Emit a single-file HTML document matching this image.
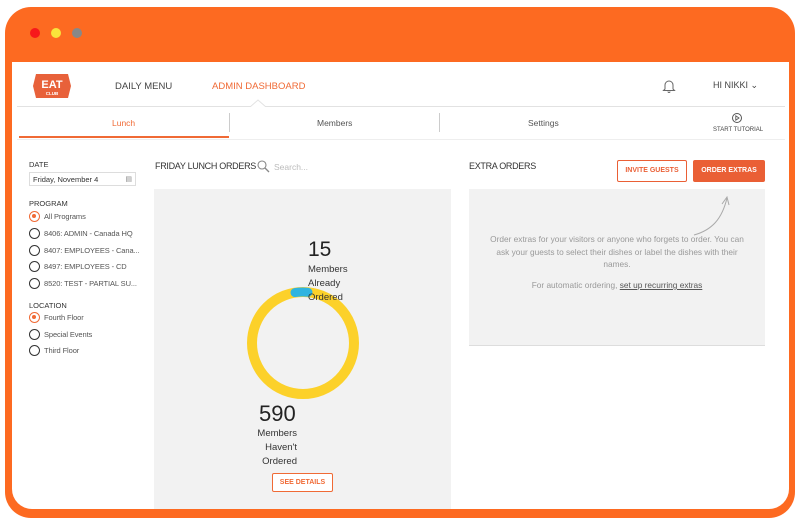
<!DOCTYPE html>
<html><head><style>
*{margin:0;padding:0;box-sizing:border-box}
body{width:800px;height:524px;background:#fff;font-family:"Liberation Sans",sans-serif;position:relative;overflow:hidden;color:#333}
.frame{position:absolute;left:5px;top:7px;width:790px;height:511px;background:#fd6a21;border-radius:26px}
.inner{position:absolute;left:12px;top:62px;width:777px;height:447px;background:#fff;border-radius:0 0 20px 20px;overflow:hidden}
.dot{position:absolute;top:28px;width:10px;height:10px;border-radius:50%}
.abs{position:absolute;white-space:nowrap}
.radio{position:absolute;width:11px;height:11px;border:1.6px solid #333;border-radius:50%}
.radio.on{border-color:#f06a35}
.radio.on::after{content:"";position:absolute;left:2px;top:2px;width:4px;height:4px;border-radius:50%;background:#f06a35}
.lbl{font-size:7.5px;color:#555;letter-spacing:-0.1px}
</style></head><body>
<div class="frame"></div>
<div class="dot" style="left:30px;background:#f7191b"></div>
<div class="dot" style="left:51px;background:#f9e43b"></div>
<div class="dot" style="left:72px;background:#888"></div>
<div class="inner">
 <svg class="abs" style="left:20px;top:9px" width="40" height="30" viewBox="0 0 40 30"><polygon points="4,3 36,3 39,15 36,27 4,27 1,15" fill="#e8613a"/><text x="20" y="17" fill="#fff" font-size="11" font-weight="bold" text-anchor="middle" font-family="Liberation Sans">EAT</text><text x="20" y="24" fill="#fff" font-size="4.5" font-weight="bold" text-anchor="middle" font-family="Liberation Sans">CLUB</text></svg>
 <div class="abs" style="left:103px;top:19px;font-size:9.5px;color:#444">DAILY MENU</div>
 <div class="abs" style="left:200px;top:19px;font-size:9.5px;color:#f06a35">ADMIN DASHBOARD</div>
 <svg class="abs" style="left:650px;top:16px" width="14" height="16" viewBox="0 0 14 16"><path d="M3 11V7a4 4 0 0 1 8 0v4l1.5 1.5h-11z M6 13.5a1 1 0 0 0 2 0" fill="none" stroke="#666" stroke-width="1"/></svg>
 <div class="abs" style="left:701px;top:18px;font-size:9px;color:#444">HI NIKKI ⌄</div>
 <div class="abs" style="left:5px;top:44px;width:768px;height:1px;background:#e2e2e2"></div>
 <svg class="abs" style="left:238px;top:37px" width="16" height="8"><path d="M0 8L8 1L16 8" fill="#fff" stroke="#e2e2e2"/></svg>
 <div class="abs" style="left:100px;top:56px;font-size:8.5px;color:#f06a35">Lunch</div>
 <div class="abs" style="left:7px;top:74px;width:210px;height:2px;background:#f06a35"></div>
 <div class="abs" style="left:217px;top:51px;width:1px;height:19px;background:#ccc"></div>
 <div class="abs" style="left:305px;top:56px;font-size:8.5px;color:#555">Members</div>
 <div class="abs" style="left:427px;top:51px;width:1px;height:19px;background:#ccc"></div>
 <div class="abs" style="left:516px;top:56px;font-size:8.5px;color:#555">Settings</div>
 <svg class="abs" style="left:719px;top:50px" width="12" height="12"><circle cx="6" cy="6" r="4.5" fill="none" stroke="#555"/><path d="M4.8 3.8v4.4l3.2-2.2z" fill="none" stroke="#555" stroke-width=".9"/></svg>
 <div class="abs" style="left:701px;top:65px;font-size:6px;color:#444">START TUTORIAL</div>
 <div class="abs" style="left:5px;top:77px;width:768px;height:1px;background:#eee"></div>

 <div class="abs" style="left:17px;top:98px;font-size:7.5px;color:#333">DATE</div>
 <div class="abs" style="left:17px;top:110px;width:107px;height:14px;border:1px solid #ddd;font-size:7.5px;padding:2px 3px;color:#333">Friday, November 4<span style="position:absolute;right:3px;top:2px;font-size:7px;color:#888">▤</span></div>
 <div class="abs" style="left:17px;top:137px;font-size:7.5px">PROGRAM</div>
 <div class="radio on" style="left:17px;top:149px"></div><div class="abs lbl" style="left:32px;top:150px">All Programs</div>
 <div class="radio" style="left:17px;top:166px"></div><div class="abs lbl" style="left:32px;top:167px">8406: ADMIN - Canada HQ</div>
 <div class="radio" style="left:17px;top:183px"></div><div class="abs lbl" style="left:32px;top:184px">8407: EMPLOYEES - Cana...</div>
 <div class="radio" style="left:17px;top:199px"></div><div class="abs lbl" style="left:32px;top:200px">8497: EMPLOYEES - CD</div>
 <div class="radio" style="left:17px;top:216px"></div><div class="abs lbl" style="left:32px;top:217px">8520: TEST - PARTIAL SU...</div>
 <div class="abs" style="left:17px;top:239px;font-size:7.5px">LOCATION</div>
 <div class="radio on" style="left:17px;top:250px"></div><div class="abs lbl" style="left:32px;top:251px">Fourth Floor</div>
 <div class="radio" style="left:17px;top:267px"></div><div class="abs lbl" style="left:32px;top:268px">Special Events</div>
 <div class="radio" style="left:17px;top:283px"></div><div class="abs lbl" style="left:32px;top:284px">Third Floor</div>

 <div class="abs" style="left:143px;top:99px;font-size:9px;letter-spacing:-0.3px;color:#333">FRIDAY LUNCH ORDERS</div>
 <svg class="abs" style="left:245px;top:98px" width="13" height="13"><circle cx="5" cy="5" r="4" fill="none" stroke="#888" stroke-width="1.1"/><path d="M8 8l4 4" stroke="#888" stroke-width="1.3"/></svg>
 <div class="abs" style="left:262px;top:100px;font-size:8.5px;color:#bbb">Search...</div>
 <div class="abs" style="left:142px;top:127px;width:297px;height:325px;background:#f2f2f2"></div>
 <svg class="abs" style="left:234px;top:224px" width="114" height="114"><circle cx="57" cy="57" r="51" fill="none" stroke="#fcd12a" stroke-width="10"/><path d="M49 6.6 A51 51 0 0 1 62 6.3" fill="none" stroke="#2fb4e0" stroke-width="9" stroke-linecap="round"/></svg>
 <div class="abs" style="left:296px;top:176px;font-size:21px;color:#222">15</div>
 <div class="abs" style="left:296px;top:201px;font-size:9.5px;line-height:13.8px;color:#333">Members<br>Already<br>Ordered</div>
 <div class="abs" style="left:247px;top:339px;font-size:22px;color:#222">590</div>
 <div class="abs" style="left:230px;top:365px;width:55px;text-align:right;font-size:9.5px;line-height:13.8px;color:#333">Members<br>Haven't<br>Ordered</div>
 <div class="abs" style="left:260px;top:411px;width:61px;height:19px;border:1px solid #f06a35;border-radius:2px;background:#fff;font-size:7px;font-weight:bold;color:#f06a35;text-align:center;line-height:17px">SEE DETAILS</div>

 <div class="abs" style="left:457px;top:99px;font-size:9px;letter-spacing:-0.3px;color:#333">EXTRA ORDERS</div>
 <div class="abs" style="left:605px;top:98px;width:70px;height:22px;border:1.3px solid #ea5f35;border-radius:2px;font-size:7px;font-weight:bold;color:#ea5f35;text-align:center;line-height:20px">INVITE GUESTS</div>
 <div class="abs" style="left:681px;top:98px;width:72px;height:22px;background:#ea5f35;border-radius:2px;font-size:7px;font-weight:bold;color:#fff;text-align:center;line-height:22px">ORDER EXTRAS</div>
 <div class="abs" style="left:457px;top:127px;width:296px;height:157px;background:#f2f2f2;border-bottom:1px solid #ddd"></div>
 <svg class="abs" style="left:680px;top:132px" width="40" height="45"><path d="M2 41 C20 36 30 25 35 4 M30 10 L35 3 L37 11" fill="none" stroke="#aaa" stroke-width="1"/></svg>
 <div class="abs" style="left:457px;top:171px;width:296px;text-align:center;font-size:8.3px;line-height:12.5px;color:#999;white-space:normal;padding:0 18px">Order extras for your visitors or anyone who forgets to order. You can ask your guests to select their dishes or label the dishes with their names.</div>
 <div class="abs" style="left:457px;top:218px;width:296px;text-align:center;font-size:8.3px;color:#999">For automatic ordering, <span style="color:#555;text-decoration:underline">set up recurring extras</span></div>
</div>
</body></html>
